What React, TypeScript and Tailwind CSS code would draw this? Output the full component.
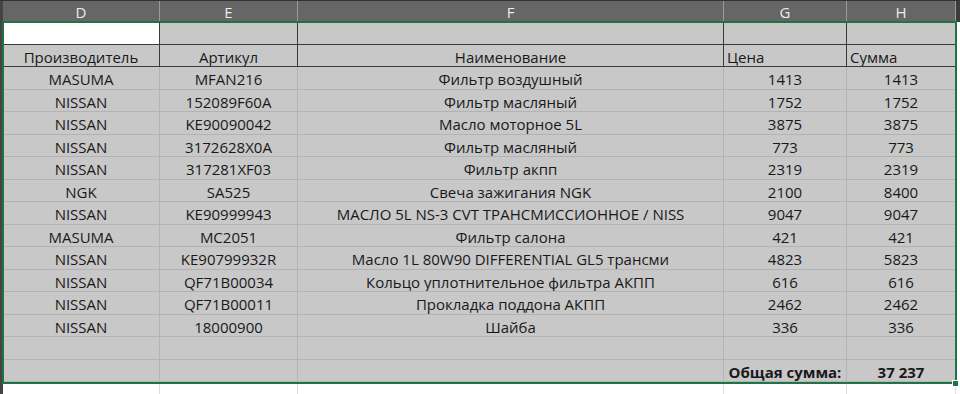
const columns = ["D", "E", "F", "G", "H"];

const items: [string, string, string, string, string][] = [
  ["MASUMA", "MFAN216", "Фильтр воздушный", "1413", "1413"],
  ["NISSAN", "152089F60A", "Фильтр масляный", "1752", "1752"],
  ["NISSAN", "KE90090042", "Масло моторное 5L", "3875", "3875"],
  ["NISSAN", "3172628X0A", "Фильтр масляный", "773", "773"],
  ["NISSAN", "317281XF03", "Фильтр акпп", "2319", "2319"],
  ["NGK", "SA525", "Свеча зажигания NGK", "2100", "8400"],
  ["NISSAN", "KE90999943", "МАСЛО 5L NS-3 CVT ТРАНСМИССИОННОЕ / NISS", "9047", "9047"],
  ["MASUMA", "MC2051", "Фильтр салона", "421", "421"],
  ["NISSAN", "KE90799932R", "Масло 1L 80W90 DIFFERENTIAL GL5 трансми", "4823", "5823"],
  ["NISSAN", "QF71B00034", "Кольцо уплотнительное фильтра АКПП", "616", "616"],
  ["NISSAN", "QF71B00011", "Прокладка поддона АКПП", "2462", "2462"],
  ["NISSAN", "18000900", "Шайба", "336", "336"],
];

const cols = "grid grid-cols-[157px_138px_426px_123px_109px]";

function Cell({ children, className = "" }: { children?: React.ReactNode; className?: string }) {
  return (
    <div className={`flex items-center overflow-hidden whitespace-nowrap border-r border-b border-[#b3b3b3] pt-[3px] ${className}`}>
      {children}
    </div>
  );
}

function BoxCell({ children, className = "" }: { children?: React.ReactNode; className?: string }) {
  return (
    <div className={`flex items-center overflow-hidden whitespace-nowrap border-r border-b border-[#3a3a3a] pt-[3px] ${className}`}>
      {children}
    </div>
  );
}

export default function App() {
  return (
    <div
      className="relative h-[394px] w-[960px] overflow-hidden bg-white text-[15px] text-[#191919]"
      style={{ fontFamily: '"Open Sans", "Noto Sans", sans-serif' }}
    >
      {/* column header strip */}
      <div className="flex h-[22px] border-t border-[#333] bg-[#666]">
        <div className="w-[3px] bg-[#444]" />
        <div className={cols}>
          {columns.map((c) => (
            <div key={c} className="flex items-center justify-center border-r border-[#9a9a9a] text-[#ececec]">
              {c}
            </div>
          ))}
        </div>
        <div className="flex-1 bg-[#3c3c3c]" />
      </div>

      {/* sheet body */}
      <div className="flex">
        <div className="w-[3px] bg-[#444]" />
        <div className={`${cols} h-[360px] grid-rows-[repeat(16,minmax(0,1fr))] bg-[#c8c8c8]`}>
          <BoxCell className="bg-white" />
          <BoxCell />
          <BoxCell />
          <BoxCell />
          <BoxCell />

          <BoxCell className="justify-center">Производитель</BoxCell>
          <BoxCell className="justify-center">Артикул</BoxCell>
          <BoxCell className="justify-center">Наименование</BoxCell>
          <BoxCell className="pl-[3px]">Цена</BoxCell>
          <BoxCell className="pl-[3px]">Сумма</BoxCell>

          {items.map((row, i) =>
            row.map((v, j) => (
              <Cell key={`${i}-${j}`} className="justify-center">
                {v}
              </Cell>
            ))
          )}

          <Cell />
          <Cell />
          <Cell />
          <Cell />
          <Cell />

          <Cell />
          <Cell />
          <Cell />
          <Cell className="justify-center font-bold">Общая сумма:</Cell>
          <Cell className="justify-center font-bold">37 237</Cell>
        </div>
      </div>

      {/* blank cells below */}
      <div className="flex h-[12px]">
        <div className="w-[3px] bg-[#444]" />
        <div className={cols}>
          {columns.map((c) => (
            <div key={c} className="border-r border-[#dcdcdc]" />
          ))}
        </div>
      </div>

      {/* selection outline */}
      <div className="pointer-events-none absolute left-[2px] top-[21px] h-[363px] w-[955px] border-2 border-[#217346]" />
      <div className="absolute left-[952px] top-[380px] h-[7px] w-[7px] border border-white bg-[#217346]" />
    </div>
  );
}
